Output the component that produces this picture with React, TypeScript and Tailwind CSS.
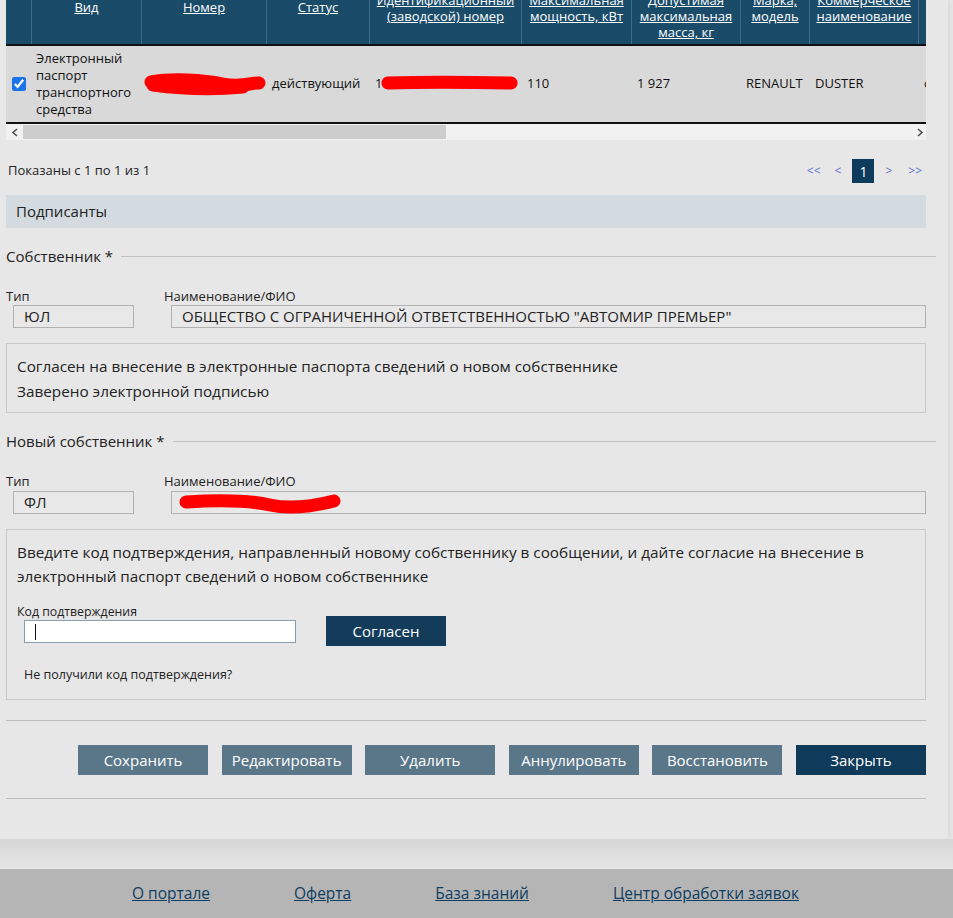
const COLS = [
  { w: 25, head: "" },
  { w: 110, head: "Вид" },
  { w: 125, head: "Номер" },
  { w: 103, head: "Статус" },
  { w: 152, head: "Идентификационный\n(заводской) номер" },
  { w: 110, head: "Максимальная\nмощность, кВт" },
  { w: 109, head: "Допустимая\nмаксимальная\nмасса, кг" },
  { w: 69, head: "Марка,\nмодель" },
  { w: 109, head: "Коммерческое\nнаименование" },
  { w: 8, head: "" },
];

const BUTTONS = ["Сохранить", "Редактировать", "Удалить", "Аннулировать", "Восстановить"];

const FOOTER_LINKS = ["О портале", "Оферта", "База знаний", "Центр обработки заявок"];

function Scribble({ w, h, d }: { w: number; h: number; d: string }) {
  return (
    <svg width={w} height={h} viewBox={`0 0 ${w} ${h}`} className="block">
      <path d={d} stroke="#ff0000" strokeWidth="13" strokeLinecap="round" strokeLinejoin="round" fill="none" />
    </svg>
  );
}

function Legend({ title }: { title: string }) {
  return (
    <div className="flex items-center h-[20px] mr-[-10px]">
      <span className="text-[15px] leading-[20px] text-[#222] pr-[8px]">{title}</span>
      <div className="flex-1 h-px bg-[#c2c2c2]" />
    </div>
  );
}

function ReadField({ children, className = "" }: { children?: React.ReactNode; className?: string }) {
  return (
    <div className={`h-[23px] border border-[#b1b1b1] bg-[#e8e8e8] flex items-center text-[15px] text-[#222] ${className}`}>
      {children}
    </div>
  );
}

export default function App() {
  return (
    <div className="min-h-[918px] bg-[#e6e6e6] text-[#222]" style={{ fontFamily: '"Open Sans", "Noto Sans", sans-serif' }}>
      {/* main panel */}
      <div className="w-[948px] bg-[#e7e7e7] shadow-[2px_0_4px_rgba(0,0,0,0.06)]">
        <div className="pl-[6px] pr-[22px] pb-[40px]">
          {/* table */}
          <div className="w-[920px]">
            <div className="h-[46px] bg-[#1a4c6a] border-b-2 border-[#111] overflow-hidden flex">
              {COLS.map((c, i) => (
                <div
                  key={i}
                  style={{ width: c.w }}
                  className={`shrink-0 h-full overflow-hidden ${i > 0 ? "border-l border-[#3f6c88]" : ""}`}
                >
                  {c.head.includes("\n") ? (
                    <div className="mt-[-8px] text-center text-white text-[13px] leading-[16px] underline whitespace-pre">
                      {c.head}
                    </div>
                  ) : (
                    <div className="mt-0 text-center text-white text-[13px] leading-[15px] underline whitespace-pre">
                      {c.head}
                    </div>
                  )}
                </div>
              ))}
            </div>
            <div className="h-[78px] bg-[#d9d9d9] border-b-2 border-[#111] flex items-center text-[13px] text-[#111]">
              <div className="w-[25px] shrink-0 flex justify-center">
                <input type="checkbox" defaultChecked readOnly className="w-[14px] h-[14px] accent-[#1a73e8]" />
              </div>
              <div className="w-[110px] shrink-0 pl-[5px] leading-[17px]">
                Электронный
                <br />
                паспорт
                <br />
                транспортного
                <br />
                средства
              </div>
              <div className="w-[125px] shrink-0 pl-[2px]">
                <Scribble w={124} h={24} d="M8 10 C 30 6, 60 8, 80 12 S 110 10, 116 11 M10 13 C 40 17, 70 18, 100 15" />
              </div>
              <div className="w-[103px] shrink-0 pl-[6px]">действующий</div>
              <div className="w-[152px] shrink-0 pl-[6px] flex items-center">
                <span className="w-[5px] overflow-hidden">1</span>
                <Scribble w={142} h={20} d="M8 9 C 40 8, 80 8, 132 9" />
              </div>
              <div className="w-[110px] shrink-0 pl-[6px]">110</div>
              <div className="w-[109px] shrink-0 pl-[6px]">1 927</div>
              <div className="w-[69px] shrink-0 pl-[6px]">RENAULT</div>
              <div className="w-[109px] shrink-0 pl-[6px]">DUSTER</div>
              <div className="w-[8px] shrink-0 pl-[6px] overflow-hidden">с</div>
            </div>
            <div className="h-[16px] bg-[#f1f1f1] flex items-center">
              <div className="w-[17px] shrink-0 flex justify-center">
                <svg width="8" height="9" viewBox="0 0 8 9">
                  <path d="M6 1 L2 4.5 L6 8" stroke="#505050" strokeWidth="1.6" fill="none" />
                </svg>
              </div>
              <div className="w-[423px] h-[14px] bg-[#cdcdcd]" />
              <div className="flex-1" />
              <div className="w-[17px] shrink-0 flex justify-center mr-[-2px]">
                <svg width="8" height="9" viewBox="0 0 8 9">
                  <path d="M2 1 L6 4.5 L2 8" stroke="#505050" strokeWidth="1.6" fill="none" />
                </svg>
              </div>
            </div>
          </div>

          {/* pagination */}
          <div className="mt-[19px] h-[24px] flex items-center justify-between">
            <span className="text-[13px] pl-[2px]">Показаны с 1 по 1 из 1</span>
            <div className="flex items-center text-[12px] text-[#5a6fd0] pr-[4px]">
              <span className="mr-[14px]">&lt;&lt;</span>
              <span className="mr-[11px]">&lt;</span>
              <span className="w-[22px] h-[24px] bg-[#0c3b5c] text-white text-[14px] flex items-center justify-center">1</span>
              <span className="ml-[11px]">&gt;</span>
              <span className="ml-[16px]">&gt;&gt;</span>
            </div>
          </div>

          {/* signers */}
          <div className="mt-[12px] h-[33px] bg-[#d3dbe0] flex items-center pl-[10px] text-[15px]">Подписанты</div>

          <div className="mt-[18px]">
            <Legend title="Собственник *" />
          </div>
          <div className="mt-[22px] flex">
            <div className="w-[158px] shrink-0">
              <div className="text-[13px] leading-[16px]">Тип</div>
              <ReadField className="mt-[1px] ml-[7px] w-[121px] pl-[10px]">ЮЛ</ReadField>
            </div>
            <div className="flex-1">
              <div className="text-[13px] leading-[16px]">Наименование/ФИО</div>
              <ReadField className="mt-[1px] ml-[7px] pl-[10px]">ОБЩЕСТВО С ОГРАНИЧЕННОЙ ОТВЕТСТВЕННОСТЬЮ "АВТОМИР ПРЕМЬЕР"</ReadField>
            </div>
          </div>
          <div className="mt-[15px] h-[70px] border border-[#c9c9c9] pl-[10px] pt-[10px] text-[15.3px] leading-[25px]">
            <div>Согласен на внесение в электронные паспорта сведений о новом собственнике</div>
            <div>Заверено электронной подписью</div>
          </div>

          <div className="mt-[18px]">
            <Legend title="Новый собственник *" />
          </div>
          <div className="mt-[22px] flex">
            <div className="w-[158px] shrink-0">
              <div className="text-[13px] leading-[16px]">Тип</div>
              <ReadField className="mt-[2px] ml-[7px] w-[121px] pl-[10px]">ФЛ</ReadField>
            </div>
            <div className="flex-1">
              <div className="text-[13px] leading-[16px]">Наименование/ФИО</div>
              <ReadField className="mt-[2px] ml-[7px] pl-[6px]">
                <Scribble w={164} h={24} d="M8 11 C 40 9, 70 9, 92 14 S 140 14, 156 10" />
              </ReadField>
            </div>
          </div>
          <div className="mt-[15px] h-[171px] border border-[#c9c9c9] pl-[10px] pt-[10px]">
            <div className="text-[15.3px] leading-[24px]">
              Введите код подтверждения, направленный новому собственнику в сообщении, и дайте согласие на внесение в
              <br />
              электронный паспорт сведений о новом собственнике
            </div>
            <div className="mt-[16px] flex">
              <div>
                <div className="text-[12.3px] leading-[16px]">Код подтверждения</div>
                <div className="ml-[7px] w-[272px] h-[23px] bg-white border border-[#8b9eae] flex items-center pl-[10px]">
                  <div className="w-px h-[16px] bg-[#111]" />
                </div>
              </div>
              <button className="ml-[30px] mt-[12px] w-[120px] h-[30px] bg-[#133c5a] text-white text-[15px]">Согласен</button>
            </div>
            <div className="mt-[21px] ml-[7px] text-[12.5px] leading-[16px]">Не получили код подтверждения?</div>
          </div>

          <div className="mt-[20px] h-px bg-[#bdbdbd]" />
          <div className="mt-[24px] flex justify-end gap-[13.6px]">
            {BUTTONS.map((b) => (
              <button key={b} className="w-[130px] h-[30px] bg-[#5a7689] text-white text-[15px]">
                {b}
              </button>
            ))}
            <button className="w-[130px] h-[30px] bg-[#0f3a59] text-white text-[15px]">Закрыть</button>
          </div>
          <div className="mt-[23px] h-px bg-[#bdbdbd]" />
        </div>
      </div>
      <div className="h-[30px] bg-gradient-to-b from-[#d6d6d6] to-[#e6e6e6]" />

      {/* footer */}
      <div className="h-[50px] bg-[#b5b5b5] flex items-center pl-[132px] gap-[84px]">
        {FOOTER_LINKS.map((l) => (
          <a key={l} className="text-[15.5px] text-[#0f3d5e] underline">
            {l}
          </a>
        ))}
      </div>
    </div>
  );
}
